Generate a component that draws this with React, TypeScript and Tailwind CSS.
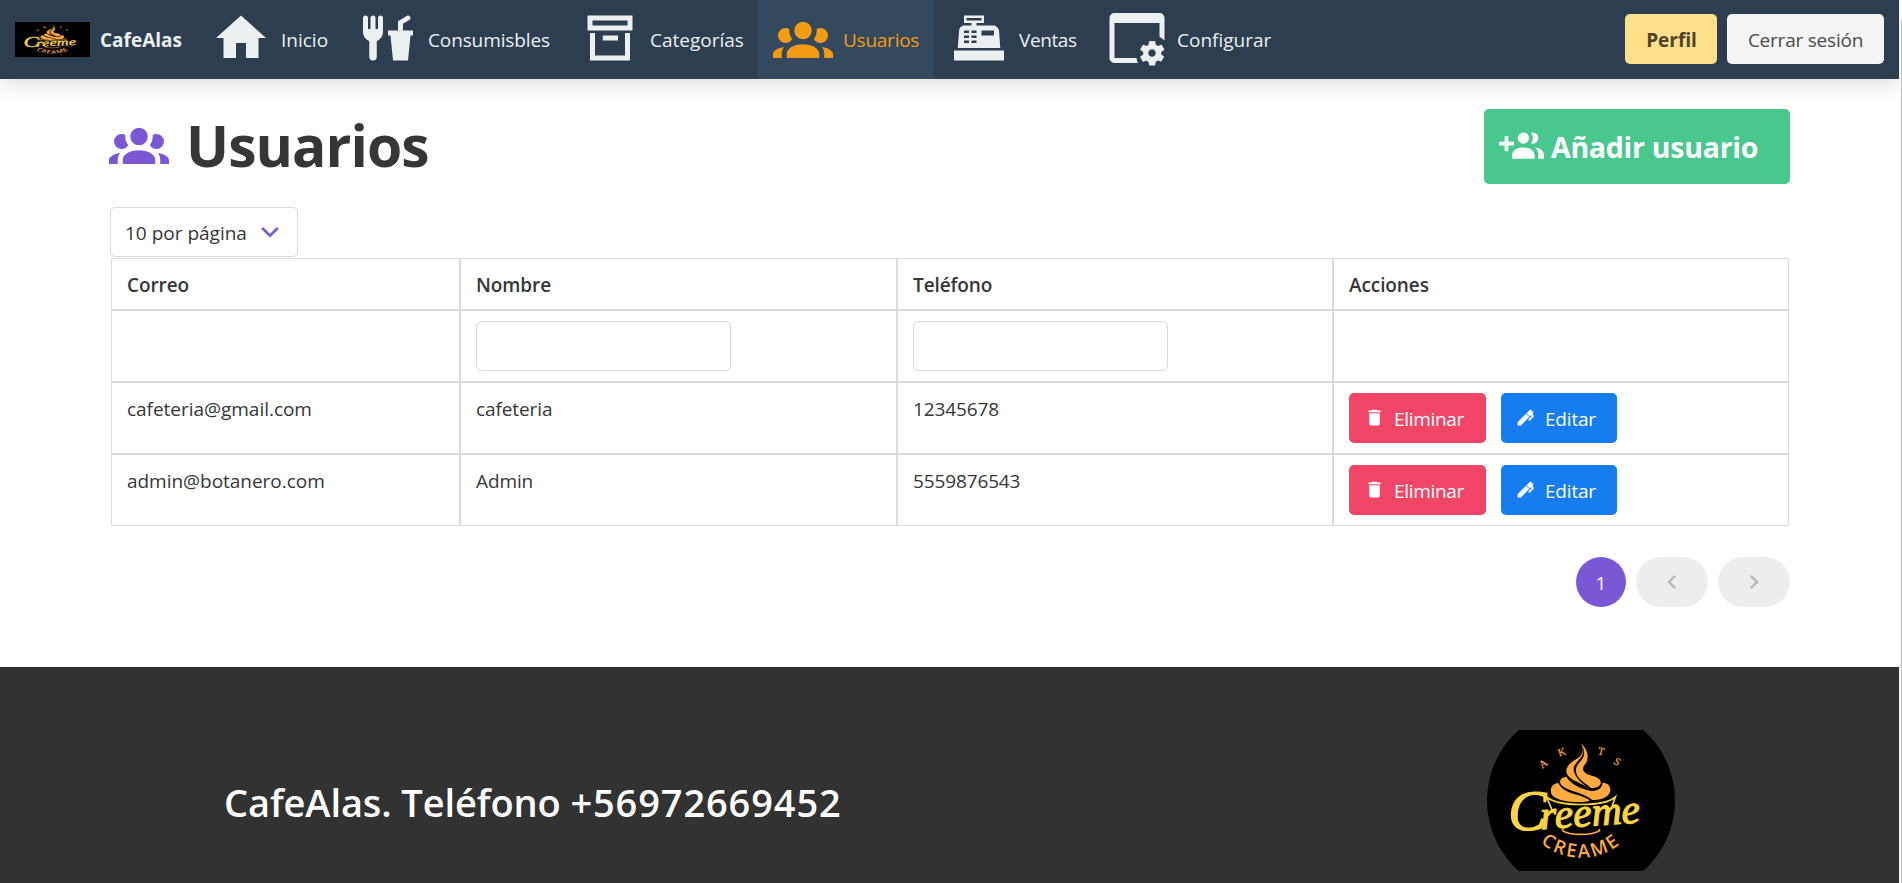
import React from "react";

const ICONS = {
  home: "M10,20V14H14V20H19V12H22L12,3L2,12H5V20H10Z",
  food: "M3,3A1,1 0 0,0 2,4V8L2,9.5C2,11.19 3.03,12.63 4.5,13.22V19.5A1.5,1.5 0 0,0 6,21A1.5,1.5 0 0,0 7.5,19.5V13.22C8.97,12.63 10,11.19 10,9.5V8L10,4A1,1 0 0,0 9,3A1,1 0 0,0 8,4V8A0.5,0.5 0 0,1 7.5,8.5A0.5,0.5 0 0,1 7,8V4A1,1 0 0,0 6,3A1,1 0 0,0 5,4V8A0.5,0.5 0 0,1 4.5,8.5A0.5,0.5 0 0,1 4,8V4A1,1 0 0,0 3,3M19.88,3C19.75,3 19.62,3.09 19.5,3.16L16,5.25V9H12V11H13L14,21H20L21,11H22V9H18V6.34L20.5,4.84C21,4.56 21.13,4 20.84,3.5C20.63,3.14 20.26,2.95 19.88,3Z",
  archive: "M20 21H4V10H6V19H18V10H20V21M3 3H21V9H3V3M5 5V7H19V5H5M9.1 11H15.2V13H9.1V11Z",
  group: "M12,5.5A3.5,3.5 0 0,1 15.5,9A3.5,3.5 0 0,1 12,12.5A3.5,3.5 0 0,1 8.5,9A3.5,3.5 0 0,1 12,5.5M5,8C5.56,8 6.08,8.15 6.53,8.42C6.38,9.85 6.8,11.27 7.66,12.38C7.16,13.34 6.16,14 5,14A3,3 0 0,1 2,11A3,3 0 0,1 5,8M19,8A3,3 0 0,1 22,11A3,3 0 0,1 19,14C17.84,14 16.84,13.34 16.34,12.38C17.2,11.27 17.62,9.85 17.47,8.42C17.92,8.15 18.44,8 19,8M5.5,18.25C5.5,16.18 8.41,14.5 12,14.5C15.59,14.5 18.5,16.18 18.5,18.25V20H5.5V18.25M0,20V18.5C0,17.11 1.89,15.94 4.45,15.6C3.86,16.28 3.5,17.22 3.5,18.25V20H0M24,20H20.5V18.25C20.5,17.22 20.14,16.28 19.55,15.6C22.11,15.94 24,17.11 24,18.5V20Z",
  register: "M2,17H22V21H2V17M6.25,7H9V6H6V3H14V6H11V7H17.8C18.8,7 19.8,8 20,9L20.5,16H3.5L4.05,9C4.05,8 5.05,7 6.25,7M13,9V11H18V9H13M6,9V10H8V9H6M9,9V10H11V9H9M6,11V12H8V11H6M9,11V12H11V11H9M6,13V14H8V13H6M9,13V14H11V13H9M7,4V5H13V4H7Z",
  settings: "M3 2H21A2 2 0 0 1 23 4V13C22.4 12.4 21.7 11.9 21 11.5V6H3V20H11.8C11.9 20.7 12.1 21.4 12.4 22H3A2 2 0 0 1 1 20V4A2 2 0 0 1 3 2M21.7 18.6V17.6L22.8 16.8C22.9 16.7 23 16.6 22.9 16.5L21.9 14.8C21.9 14.7 21.7 14.7 21.6 14.7L20.4 15.2C20.1 15 19.8 14.8 19.5 14.7L19.3 13.4C19.3 13.3 19.2 13.2 19.1 13.2H17.1C16.9 13.2 16.8 13.3 16.8 13.4L16.6 14.7C16.3 14.9 16.1 15 15.8 15.2L14.6 14.7C14.5 14.7 14.4 14.7 14.3 14.8L13.3 16.5C13.3 16.6 13.3 16.7 13.4 16.8L14.5 17.6V18.6L13.4 19.4C13.3 19.5 13.2 19.6 13.3 19.7L14.3 21.4C14.4 21.5 14.5 21.5 14.6 21.5L15.8 21C16 21.2 16.3 21.4 16.6 21.5L16.8 22.8C16.9 22.9 17 23 17.1 23H19.1C19.2 23 19.3 22.9 19.3 22.8L19.5 21.5C19.8 21.3 20 21.2 20.3 21L21.5 21.4C21.6 21.4 21.7 21.4 21.8 21.3L22.8 19.6C22.9 19.5 22.9 19.4 22.8 19.4L21.7 18.6M18 19.5C17.2 19.5 16.5 18.8 16.5 18S17.2 16.5 18 16.5 19.5 17.2 19.5 18 18.8 19.5 18 19.5",
  groupPlus: "M19 17V19H7V17S7 13 13 13 19 17 19 17M16 8A3 3 0 1 0 13 11A3 3 0 0 0 16 8M19.2 13.06A5.6 5.6 0 0 1 21 17V19H24V17S24 13.55 19.2 13.06M18 5A2.91 2.91 0 0 0 17.11 5.14A5 5 0 0 1 17.11 10.86A2.91 2.91 0 0 0 18 11A3 3 0 0 0 18 5M8 10H5V7H3V10H0V12H3V15H5V12H8Z",
  trash: "M19,4H15.5L14.5,3H9.5L8.5,4H5V6H19M6,19A2,2 0 0,0 8,21H16A2,2 0 0,0 18,19V7H6V19Z",
  pen: "M20.71,7.04C20.37,7.38 20.04,7.71 20.03,8.04C20,8.36 20.34,8.69 20.66,9C21.14,9.5 21.61,9.95 21.59,10.44C21.57,10.93 21.06,11.44 20.55,11.94L16.42,16.08L15,14.66L19.25,10.42L18.29,9.46L16.87,10.87L13.12,7.12L16.96,3.29C17.35,2.9 18,2.9 18.37,3.29L20.71,5.63C21.1,6 21.1,6.65 20.71,7.04M3,17.25L12.56,7.68L16.31,11.43L6.75,21H3V17.25Z",
  left: "M15.41,16.58L10.83,12L15.41,7.41L14,6L8,12L14,18L15.41,16.58Z",
  right: "M8.59,16.58L13.17,12L8.59,7.41L10,6L16,12L10,18L8.59,16.58Z",
};

function Icon({ name, className }: { name: keyof typeof ICONS; className: string }) {
  return (
    <svg viewBox="0 0 24 24" fill="currentColor" fillRule="evenodd" className={`shrink-0 ${className}`}>
      <path d={ICONS[name]} />
    </svg>
  );
}

function Logo({ id, round, className }: { id: string; round?: boolean; className: string }) {
  return (
    <svg viewBox="-24 6 564 423" preserveAspectRatio="none" className={`shrink-0 ${className}`}>
      {round ? <circle cx="258" cy="217.5" r="282" fill="#000" /> : <rect x="-24" y="6" width="564" height="423" fill="#000" />}
      <g fill="#ffa940">
        <path d="M254 46C270 62 264 82 246 92C220 106 206 125 219 143C232 158 262 166 280 181C256 162 234 142 236 120C240 100 270 90 264 60Z" />
        <path d="M258 46C286 74 280 98 268 112C258 126 268 138 290 143C316 148 324 164 312 174C304 180 294 180 288 180C262 158 240 148 243 122C246 102 278 92 264 58Z" />
        <path d="M214 146C196 148 190 160 200 172C222 192 262 192 292 216C320 218 348 204 346 184C345 168 330 162 322 166C322 182 304 192 284 188C256 180 230 172 214 146Z" />
        <path d="M190 165C168 168 164 184 170 200C184 216 216 223 258 222C270 222 282 220 284 217C256 196 206 200 190 165Z" />
        <g fontFamily="Liberation Serif, serif" fontSize="32" textAnchor="middle" stroke="#ffa940" strokeWidth="0.6">
          <text transform="translate(151 115) rotate(-38)">A</text>
          <text transform="translate(204 82) rotate(-18)">K</text>
          <text transform="translate(316 80) rotate(14)">T</text>
          <text transform="translate(361 110) rotate(34)">S</text>
        </g>
        <path id={id} d="M126 334A187 187 0 0 0 388 337" fill="none" />
        <text fontFamily="Open Sans, sans-serif" fontWeight="600" fontSize="56" letterSpacing="7" textAnchor="middle">
          <textPath href={`#${id}`} startOffset="50.5%">CREAME</textPath>
        </text>
      </g>
      <path d="M202 308C225 323 290 323 314 308M203 303V310M313 303V310" fill="none" stroke="#ffa940" strokeWidth="5" />
      <path d="M171 246L155 207C190 236 325 238 361 207L349 242" fill="none" stroke="#fcd53f" strokeWidth="5" />
      <g fill="#fcd53f" stroke="#fcd53f" strokeWidth="3.5" strokeLinejoin="round" fontFamily="Liberation Serif, serif" fontStyle="italic">
        <text x="40" y="307" fontSize="172">C</text>
        <text x="138" y="304" fontSize="122" textLength="300" lengthAdjust="spacingAndGlyphs" transform="rotate(-4 138 304)">reeme</text>
      </g>
    </svg>
  );
}

function NavItem({ icon, label, className }: { icon: keyof typeof ICONS; label: string; className: string }) {
  return (
    <a className={`flex h-full items-center gap-[10px] pl-[15px] ${className}`}>
      <Icon name={icon} className="mb-[3px] size-[60px]" />
      <span className="mt-px">{label}</span>
    </a>
  );
}

function Cell({ children, className = "" }: { children?: React.ReactNode; className?: string }) {
  return <div className={`border border-[#dbdbdb] px-[15px] py-[10px] leading-[33px] ${className}`}>{children}</div>;
}

const users = [
  { email: "cafeteria@gmail.com", name: "cafeteria", phone: "12345678" },
  { email: "admin@botanero.com", name: "Admin", phone: "5559876543" },
];

function FilterInput() {
  return (
    <input className="block h-[50px] w-[255px] rounded-[5px] border border-[#dbdbdb] bg-white px-3 shadow-[inset_0_1px_2px_rgba(10,10,10,0.05)]" />
  );
}

export default function App() {
  return (
    <div className="flex h-[883px] w-[1902px] overflow-hidden bg-white font-['Open_Sans',sans-serif] text-[19px] text-[#363636]">
      <div className="flex w-[1899px] flex-col overflow-hidden">
        <nav className="z-10 flex h-[79px] shrink-0 items-center bg-[#2d3e50] text-[#ecf0f1] shadow-[0_8px_16px_rgba(10,10,10,0.1)]">
          <a className="flex h-full w-[196px] items-center gap-[10px] pl-[15px]">
            <Logo id="brand-arc" className="h-[35px] w-[75px]" />
            <span className="mt-px font-bold">CafeAlas</span>
          </a>
          <NavItem icon="home" label="Inicio" className="w-[147px]" />
          <NavItem icon="food" label="Consumisbles" className="w-[222px] tracking-[-0.12px]" />
          <NavItem icon="archive" label="Categorías" className="w-[193px]" />
          <NavItem icon="group" label="Usuarios" className="w-[176px] bg-[#34495e] tracking-[-0.25px] text-[#f39c12]" />
          <NavItem icon="register" label="Ventas" className="w-[158px] tracking-[-0.4px]" />
          <NavItem icon="settings" label="Configurar" className="w-[196px]" />
          <div className="mb-px ml-auto flex gap-[10px] pr-[15px]">
            <button className="h-[50px] w-[92px] rounded-[5px] bg-[#ffe08a] pt-[2px] pl-px font-bold text-[#4d4329]">Perfil</button>
            <button className="h-[50px] w-[157px] rounded-[5px] bg-[#f5f5f5] pt-[2px] tracking-[-0.22px] text-[#4a4a4a]">Cerrar sesión</button>
          </div>
        </nav>

        <main className="flex h-[588px] shrink-0 flex-col pt-[30px] pr-[109px] pl-[109px]">
          <header className="flex h-[75px] items-start justify-between">
            <h1 className="flex items-center gap-[17px] text-[57px] leading-[72px] font-bold tracking-[-0.95px]">
              <Icon name="group" className="mb-[3px] size-[60px] text-[#7957d5]" />
              Usuarios
            </h1>
            <button className="flex h-[75px] w-[306px] items-center gap-[7px] rounded-[5px] bg-[#48c78e] pl-[15px] text-[28.5px] font-bold tracking-[-0.26px] text-white">
              <Icon name="groupPlus" className="mb-[2px] size-[45px]" />
              <span className="mt-px">Añadir usuario</span>
            </button>
          </header>

          <div className="mt-[23px] ml-px flex h-[50px] w-[188px] items-center justify-between rounded-[5px] border border-[#dbdbdb] pr-[18px] pl-[14px]">
            <span className="mt-[2px]">10 por página</span>
            <svg viewBox="0 0 18 12" className="h-3 w-[18px]" fill="none" stroke="#7957d5" strokeWidth="2.6">
              <path d="M1.2 2L9 9.6L16.8 2" />
            </svg>
          </div>

          <div className="mt-px ml-[2px] grid w-[1678px] grid-cols-[349px_437px_436px_456px]">
            {["Correo", "Nombre", "Teléfono", "Acciones"].map((h) => (
              <Cell key={h} className="h-[52px] font-semibold tracking-[-0.1px]">
                {h}
              </Cell>
            ))}
            <Cell className="h-[72px]" />
            <Cell>
              <FilterInput />
            </Cell>
            <Cell>
              <FilterInput />
            </Cell>
            <Cell />
            {users.map((u) => (
              <React.Fragment key={u.email}>
                <Cell className="h-[72px] tracking-[-0.03px]">{u.email}</Cell>
                <Cell className="tracking-[-0.1px]">{u.name}</Cell>
                <Cell className="tracking-[-0.13px]">{u.phone}</Cell>
                <Cell className="flex gap-[15px] text-white">
                  <button className="flex h-[50px] w-[137px] items-center gap-[9px] rounded-[5px] bg-[#f14668] pl-[15px] tracking-[-0.32px]">
                    <Icon name="trash" className="mb-[2px] size-[21px]" />
                    <span className="mt-[2px]">Eliminar</span>
                  </button>
                  <button className="flex h-[50px] w-[116px] items-center gap-[9px] rounded-[5px] bg-[#167df0] pl-[14px] tracking-[-0.2px]">
                    <Icon name="pen" className="mb-[2px] size-[21px]" />
                    <span className="mt-[2px]">Editar</span>
                  </button>
                </Cell>
              </React.Fragment>
            ))}
          </div>

          <div className="mt-[31px] flex justify-end gap-[10px]">
            <button className="size-[50px] rounded-full bg-[#7957d5] pt-[2px] text-white">1</button>
            <button className="flex h-[50px] w-[72px] items-center justify-center rounded-full bg-[#ededed] text-[#b8b8b8]">
              <Icon name="left" className="size-[28px]" />
            </button>
            <button className="flex h-[50px] w-[72px] items-center justify-center rounded-full bg-[#ededed] text-[#b8b8b8]">
              <Icon name="right" className="size-[28px]" />
            </button>
          </div>
        </main>

        <footer className="flex flex-1 items-start justify-between bg-[#323232] pt-[63px] pr-[224px] pl-[224px]">
          <p className="pt-[2px] text-[38px] leading-[141px] font-semibold tracking-[-0.1px] text-white">
            CafeAlas. Teléfono <span className="tracking-[0.87px]">+56972669452</span>
          </p>
          <Logo id="footer-arc" round className="h-[141px] w-[188px]" />
        </footer>
      </div>
      <div className="flex w-[3px] justify-end bg-[#f8f8f8] pt-5">
        <div className="w-px bg-[#c1c1c1]" />
      </div>
    </div>
  );
}
